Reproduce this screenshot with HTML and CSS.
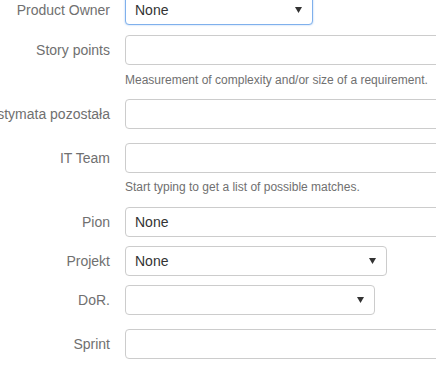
FILE: index.html
```html
<!DOCTYPE html>
<html>
<head>
<meta charset="utf-8">
<link rel="stylesheet" href="styles.css">
</head>
<body>
<div class="form">
  <div class="row row-first gap-10">
    <div class="label">Product Owner</div>
    <div class="control select focused w-po"><span class="value">None</span><svg class="arrow" width="7" height="6" viewBox="0 0 7 6"><path d="M0 0H7L3.5 6Z" fill="#333"/></svg></div>
  </div>
  <div class="row">
    <div class="label">Story points</div>
    <div class="control wide"></div>
  </div>
  <div class="help help-a">Measurement of complexity and/or size of a requirement.</div>
  <div class="row gap-14">
    <div class="label">Estymata pozostała</div>
    <div class="control wide"></div>
  </div>
  <div class="row">
    <div class="label">IT Team</div>
    <div class="control wide"></div>
  </div>
  <div class="help help-b">Start typing to get a list of possible matches.</div>
  <div class="row gap-9">
    <div class="label">Pion</div>
    <div class="control wide"><span class="value">None</span></div>
  </div>
  <div class="row gap-9">
    <div class="label">Projekt</div>
    <div class="control select w-projekt"><span class="value">None</span><svg class="arrow" width="7" height="6" viewBox="0 0 7 6"><path d="M0 0H7L3.5 6Z" fill="#333"/></svg></div>
  </div>
  <div class="row gap-14">
    <div class="label">DoR.</div>
    <div class="control select w-dor"><span class="value"></span><svg class="arrow" width="7" height="6" viewBox="0 0 7 6"><path d="M0 0H7L3.5 6Z" fill="#333"/></svg></div>
  </div>
  <div class="row">
    <div class="label">Sprint</div>
    <div class="control wide"></div>
  </div>
</div>
</body>
</html>
```
FILE: styles.css
```css
html, body {
  margin: 0;
  padding: 0;
  background: #fff;
  overflow: hidden;
}
body {
  width: 436px;
  height: 365px;
  font-family: "Liberation Sans", Arial, sans-serif;
}
.form {
  display: flex;
  flex-direction: column;
}
.row {
  display: flex;
  align-items: center;
  gap: 15px;
}
.row-first { margin-top: -5px; }
.gap-10 { margin-bottom: 10px; }
.gap-9 { margin-bottom: 9px; }
.gap-14 { margin-bottom: 14px; }
.label {
  flex: 0 0 110px;
  width: 110px;
  display: flex;
  justify-content: flex-end;
  white-space: nowrap;
  font-size: 14px;
  color: #707070;
}
.control {
  flex: 0 0 auto;
  box-sizing: border-box;
  height: 30px;
  border: 1px solid #ccc;
  border-radius: 4px;
  background: #fff;
  display: flex;
  align-items: center;
  padding: 0 9px;
  font-size: 14px;
  color: #333;
}
.wide { width: 340px; }
.w-po { width: 188px; }
.w-projekt { width: 262px; }
.w-dor { width: 250px; }
.select { justify-content: space-between; }
.arrow { margin-right: 1px; }
.focused {
  border-color: #7fb0ec;
  box-shadow: 0 0 2px rgba(102, 160, 233, 0.6);
}
.help {
  padding-left: 125px;
  font-size: 12px;
  line-height: 20px;
  color: #707070;
  white-space: nowrap;
}
.help-a { margin-top: 5px; margin-bottom: 9px; }
.help-b { margin-top: 4px; margin-bottom: 10px; }
```
